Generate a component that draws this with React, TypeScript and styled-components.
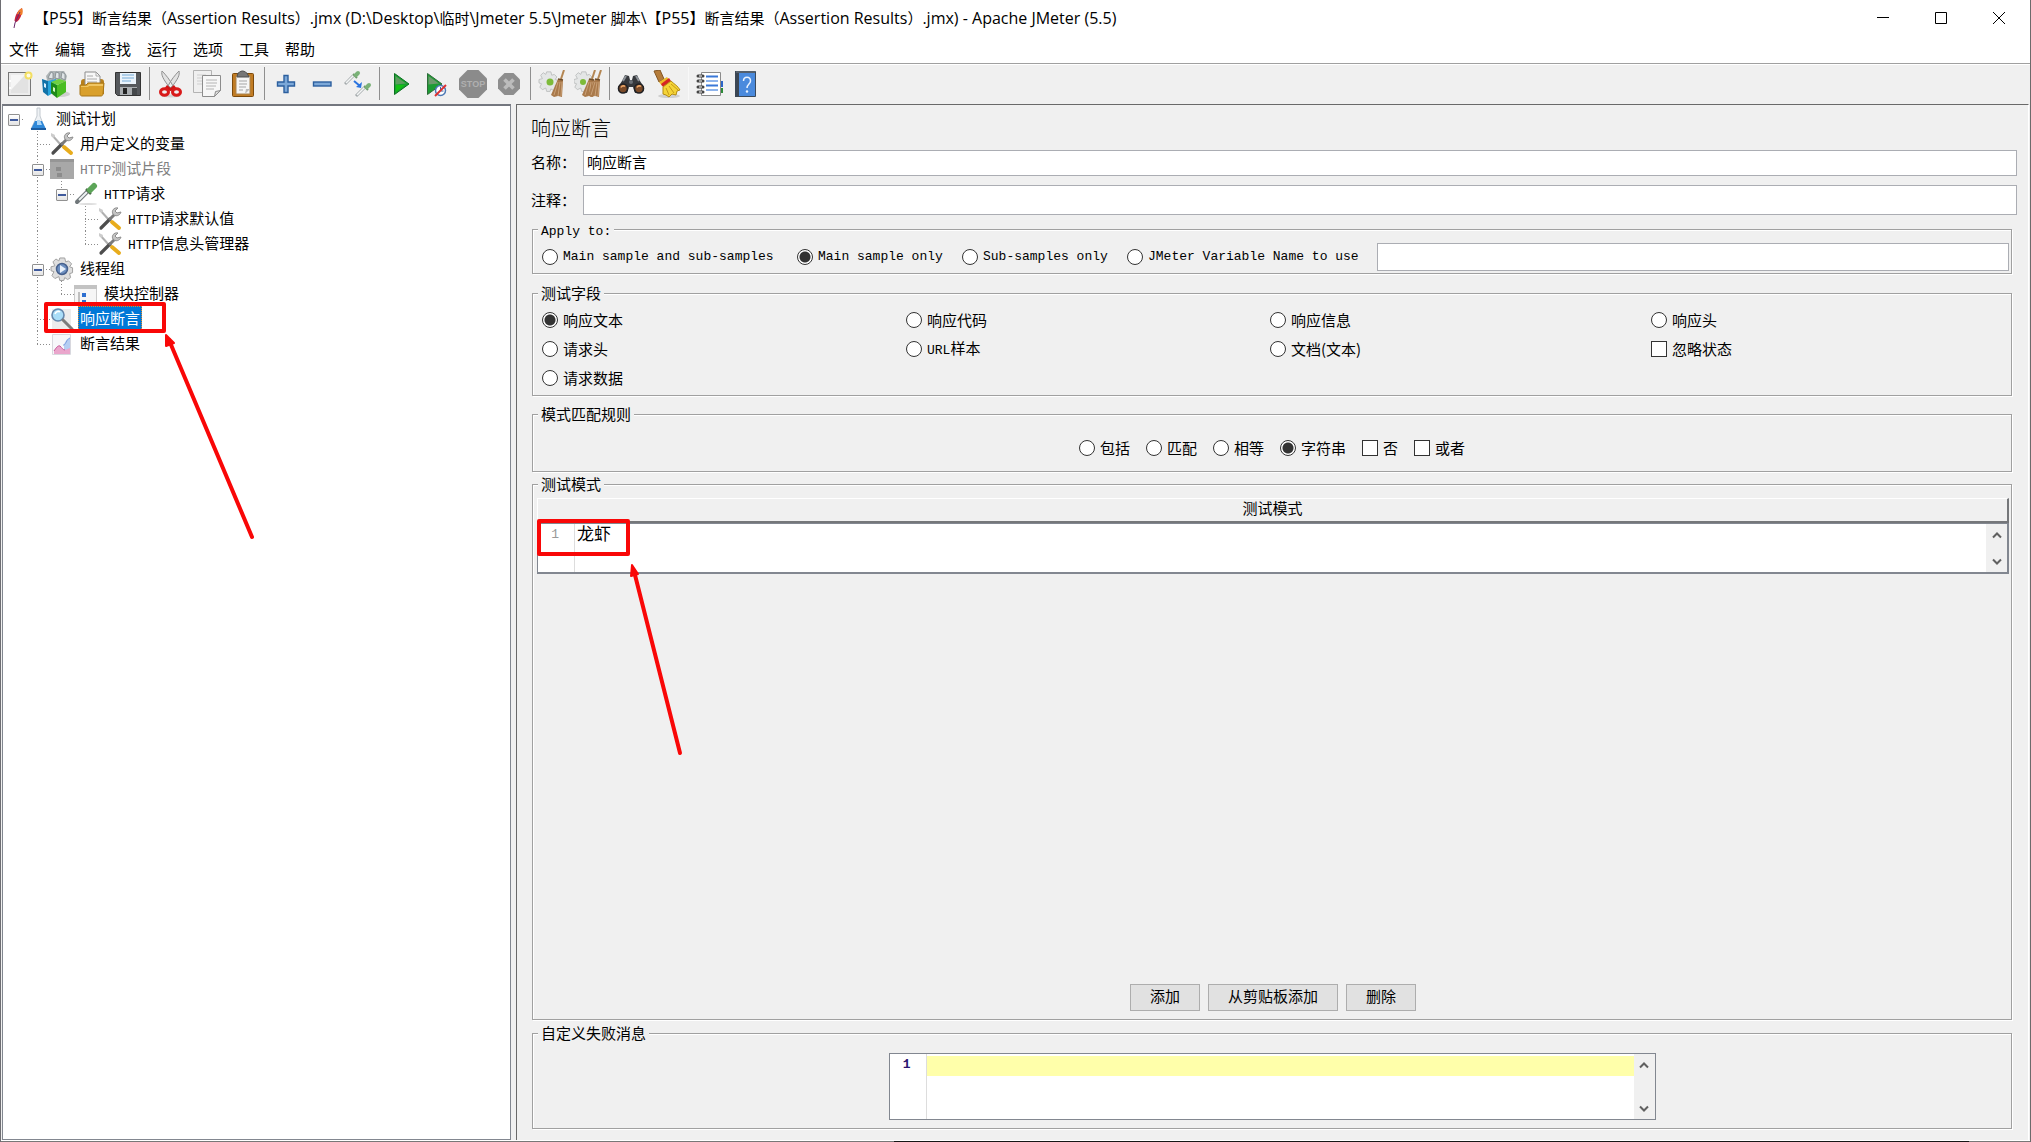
import React, { ReactNode } from "react";
import styled, { createGlobalStyle, css } from "styled-components";

const songStack = `"Liberation Mono", "Noto Sans CJK SC", monospace`;
const cjkStack = `"Noto Sans CJK SC", "Liberation Mono", sans-serif`;
const titleStack = `"Open Sans", "Noto Sans CJK SC", sans-serif`;

const face = "#f0f0f0";
const etch = "#a0a0a0";
const fieldBorder = "#abadb3";
const paneBorder = "#828790";

const GlobalStyle = createGlobalStyle`
  *, *::before, *::after { box-sizing: border-box; }
  body { margin: 0; background: ${face}; color: #000; font: 15px/20px ${cjkStack}; }
  button, input, textarea { font: inherit; color: inherit; margin: 0; padding: 0; border-radius: 0; outline: none; }
  ul { list-style: none; margin: 0; padding: 0; }
`;

/* ---------- window frame ---------- */

const Frame = styled.div`
  position: relative;
  display: flex;
  flex-direction: column;
  height: 100vh;
  min-height: 800px;
  background: ${face};
  border-left: 1px solid #6e6e73;
  border-right: 1px solid #6b6b6b;
  overflow: hidden;
`;

const BottomEdge = styled.div`
  height: 2px;
  border-top: 1px solid #fff;
  background: linear-gradient(to right, #777 0 44%, #161616 44% 97%, #777 97%);
`;

const TitleBar = styled.header`
  display: flex;
  align-items: center;
  height: 36px;
  padding: 0 2px 0 7px;
  background: #fff;
`;

const Title = styled.h1`
  flex: 1;
  margin: 0 0 0 6px;
  font: 400 15px/20px ${titleStack};
  white-space: nowrap;
`;

const TitleLatin = styled.span`
  font-size: 16px;
`;

const CaptionButton = styled.button`
  display: grid;
  place-items: center;
  width: 58px;
  height: 36px;
  border: 0;
  background: transparent;
`;

const MenuBar = styled.nav`
  display: flex;
  height: 28px;
  background: #fff;
  border-bottom: 1px solid ${etch};
`;

const MenuItem = styled.button`
  padding: 0 8px 2px;
  border: 0;
  background: transparent;
  font-family: ${titleStack};
  line-height: 24px;
`;

const ToolBar = styled.div`
  display: flex;
  align-items: center;
  height: 40px;
  padding: 0 0 2px 1px;
  border-top: 1px solid #fff;
`;

const ToolButton = styled.button`
  display: grid;
  place-items: center;
  width: 36px;
  height: 36px;
  border: 0;
  background: transparent;
`;

const ToolSeparator = styled.span<{ $faint?: boolean }>`
  width: 1px;
  height: 33px;
  margin: 0 3px;
  background: ${(p) => (p.$faint ? "#f8f8f8" : "#8f8f8f")};
`;

const Workspace = styled.main`
  flex: 1;
  display: grid;
  grid-template-columns: 509px 1fr;
  gap: 5px;
  min-height: 0;
  padding: 0 1px;
`;

/* ---------- test plan tree ---------- */

const TreePane = styled.section`
  background: #fff;
  border: 1px solid ${paneBorder};
  border-top: 2px solid #74777f;
`;

const TreeList = styled.ul`
  && {
    margin-left: -1px;
  }
`;

const TreeRow = styled.li`
  display: flex;
  align-items: center;
  height: 25px;
`;

type Guide = "none" | "line" | "tee" | "end" | "box" | "root";

const dotsDown = "repeating-linear-gradient(to bottom, #8c8c8c 0 1px, transparent 1px 3px)";
const dotsAcross = "repeating-linear-gradient(to right, #8c8c8c 0 1px, transparent 1px 3px)";

const guideArt: Record<Guide, string> = {
  none: "none",
  line: `${dotsDown} 11px 0 / 1px 100% no-repeat`,
  tee: `${dotsDown} 11px 0 / 1px 100% no-repeat, ${dotsAcross} 11px 13px / 13px 1px no-repeat`,
  end: `${dotsDown} 11px 0 / 1px 13px no-repeat, ${dotsAcross} 11px 13px / 13px 1px no-repeat`,
  box: `${dotsDown} 11px 0 / 1px 100% no-repeat, ${dotsAcross} 11px 13px / 13px 1px no-repeat`,
  root: `${dotsAcross} 11px 13px / 11px 1px no-repeat`,
};

const GuideCell = styled.span<{ $kind: Guide }>`
  display: grid;
  place-items: center;
  width: 24px;
  height: 25px;
  padding: 2px 1px 0 0;
  background: ${(p) => guideArt[p.$kind]};
`;

const Expander = styled.button`
  width: 12px;
  height: 12px;
  border: 1px solid #919191;
  border-radius: 1px;
  background: linear-gradient(#3f5a9c, #3f5a9c) center / 8px 2px no-repeat, linear-gradient(#fff, #e3e3e3);
`;

const TreeIcon = styled.span`
  display: grid;
  place-items: center;
  width: 24px;
  height: 25px;
`;

const TreeLabel = styled.span<{ $disabled?: boolean; $selected?: boolean }>`
  height: 25px;
  margin-left: 4px;
  padding: 0 2px;
  line-height: 23px;
  white-space: nowrap;
  ${(p) => p.$disabled && css`color: #808080;`}
  ${(p) =>
    p.$selected &&
    css`
      color: #fff;
      background: #0078d7;
      outline: 1px dotted #e08a2c;
      outline-offset: -1px;
    `}
`;

const Latin = styled.span`
  font: 13px/20px ${songStack};
`;

/* ---------- editor pane ---------- */

const EditorPane = styled.form`
  display: flex;
  flex-direction: column;
  min-width: 0;
  padding: 11px 11px 11px 14px;
  border-left: 1px solid #696969;
  border-top: 1px solid #696969;
  border-right: 1px solid #fff;
`;

const Heading = styled.h2`
  margin: 0;
  font: 300 20px/24px ${cjkStack};
`;

const FieldRow = styled.div`
  display: grid;
  grid-template-columns: 52px 1fr;
  align-items: center;
`;

const NameRow = styled(FieldRow)`
  margin-top: 10px;

  > label {
    padding-bottom: 2px;
  }
`;

const CommentRow = styled(FieldRow)`
  margin-top: 9px;
`;

const TextField = styled.input<{ $tall?: boolean }>`
  width: 100%;
  height: ${(p) => (p.$tall ? 30 : 26)}px;
  padding: 0 3px 4px;
  border: 1px solid ${fieldBorder};
  background: #fff;
`;

const Group = styled.fieldset<{ $gap: number }>`
  min-width: 0;
  margin: ${(p) => p.$gap}px 5px 0 1px;
  padding: 0;
  border: 1px solid ${etch};
  box-shadow: 1px 1px 0 #fff, inset 1px 1px 0 #fff;

  > legend {
    height: 17px;
    margin-left: 5px;
    padding: 0 3px;
    line-height: 16px;
    background: ${face};
  }
`;

const Choice = styled.label`
  display: flex;
  align-items: center;
  gap: 5px;
  white-space: nowrap;
`;

const Tick = styled.input`
  appearance: none;
  flex: none;
  width: 16px;
  height: 16px;
  border: 1px solid #333;
  background: #fff;

  &[type="radio"] {
    border-radius: 50%;
  }
  &[type="radio"]:checked {
    background: radial-gradient(circle, #333 0 5px, #fff 6px);
  }
`;

const ApplyTo = styled.div`
  display: grid;
  grid-template-columns: 255px 165px 165px 250px 1fr;
  align-items: center;
  padding: 5px 2px 2px 9px;
`;

const VariableField = styled(TextField)`
  height: 28px;
`;

const FieldGrid = styled.div`
  display: grid;
  grid-template-columns: 364fr 364fr 381fr 358fr;
  grid-auto-rows: 28px;
  row-gap: 1px;
  padding: 4px 2px 3px 9px;
`;

const RuleRow = styled.div`
  display: flex;
  justify-content: center;
  align-items: center;
  gap: 16px;
  height: 48px;
  padding-top: 1px;
`;

const PatternGroup = styled(Group)`
  flex: 1;
`;

const PatternBody = styled.div`
  display: flex;
  flex-direction: column;
  height: 100%;
  padding: 5px 2px 8px 4px;
`;

const PatternTable = styled.table`
  width: 100%;
  border-collapse: separate;
  border-spacing: 0;

  th {
    height: 25px;
    padding: 0 0 4px;
    border: 1px solid #fff;
    border-right: 2px solid #75777a;
    border-bottom: 2px solid #75777a;
    font-weight: 400;
    line-height: 16px;
  }
  td {
    padding: 0;
  }
`;

const CodePane = styled.div<{ $height: number }>`
  display: grid;
  grid-template-columns: 37px 1fr 21px;
  height: ${(p) => p.$height}px;
  border: 1px solid ${paneBorder};
  background: #fff;
`;

const PatternPane = styled(CodePane)`
  border-bottom-width: 2px;
  border-right-width: 2px;
`;

const Gutter = styled.span<{ $current?: boolean }>`
  padding-right: 15px;
  border-right: 1px solid #ddd;
  color: #999;
  font: 13px/22px ${songStack};
  text-align: right;
  ${(p) => p.$current && css`color: #2a1470; font-weight: 700;`}
`;

const CodeInput = styled.textarea<{ $highlight?: boolean }>`
  width: 100%;
  height: 100%;
  padding: 0 2px;
  border: 0;
  resize: none;
  overflow: hidden;
  font-size: 17px;
  line-height: 18px;
  background: ${(p) => (p.$highlight ? "linear-gradient(#ffffaa, #ffffaa) 0 2px / 100% 20px no-repeat #fff" : "#fff")};
`;

const ScrollBar = styled.div`
  display: flex;
  flex-direction: column;
  justify-content: space-between;
  background: ${face};
`;

const ScrollButton = styled.button`
  display: grid;
  place-items: center;
  height: 22px;
  border: 0;
  background: transparent;
`;

const ButtonRow = styled.div`
  display: flex;
  justify-content: center;
  gap: 8px;
  margin-top: auto;
`;

const PushButton = styled.button`
  height: 27px;
  padding: 0 19px 4px;
  border: 1px solid #adadad;
  background: #e1e1e1;
  line-height: 20px;
`;

const MessageBody = styled.div`
  display: flex;
  justify-content: center;
  padding: 11px 0 8px;
`;

const MessagePane = styled(CodePane)`
  width: 767px;
`;

/* ---------- annotations ---------- */

const Markup = styled.svg<{ $x: number; $y: number }>`
  position: absolute;
  left: ${(p) => p.$x}px;
  top: ${(p) => p.$y}px;
  pointer-events: none;
  fill: none;
  stroke: #f90707;
  stroke-width: 4;
  stroke-linecap: round;
  stroke-linejoin: round;
`;

/* ---------- icons ---------- */

const Icon = ({ children, size = 28 }: { children: ReactNode; size?: number }) => (
  <svg width={size} height={size} viewBox={`0 0 ${size} ${size}`} aria-hidden="true">
    {children}
  </svg>
);

const Feather = () => (
  <svg width="20" height="24" viewBox="0 0 20 24" aria-hidden="true">
    <path d="M14 2c-4 2-7 7-7.500 13l2 1C12 14 15 7 14 2Z" fill="#c8203c" />
    <path d="M14 2c-2 1-4 3-5 6l5 1c1-2 1-5 0-7Z" fill="#f0802c" />
    <path d="M12 6 7 17l-1 5" stroke="#6b2a6d" strokeWidth="1" fill="none" />
  </svg>
);

const NewIcon = () => (
  <Icon>
    <rect x="2.500" y="2.500" width="22" height="23" fill="#ececec" stroke="#777" />
    <path d="M5 5h17v18H5Z" fill="#e2e2e2" />
    <path d="M5 5h14L5 20Z" fill="#f6f6f6" />
    <path d="M4 10v2M4 17v2" stroke="#fff" strokeWidth="2" />
    <circle cx="22.500" cy="5.500" r="3" fill="#fffbe0" stroke="#f3df63" strokeWidth="2" />
  </Icon>
);

const TemplatesIcon = () => (
  <Icon>
    <ellipse cx="19" cy="24" rx="9" ry="3" fill="#cfcfcf" />
    <path d="M4 6 8 1h14l3 5-2 8H6Z" fill="#aeb4b6" />
    <path d="m6 8 3-6 2 1v6ZM13 8l1-6 3 1v6ZM19 8l1-6 3 2v6Z" fill="#dfe4e6" stroke="#7d868a" strokeWidth=".8" />
    <path d="m0 9 6 2v15l-5-4Z" fill="#1172a8" />
    <path d="m6 11 8-2v12l-8 5Z" fill="#28a5dc" />
    <path d="M2 13l2 1v4l-2-1Z" fill="#d8f0ff" />
    <path d="m9 12 6 3v13l-6-5Z" fill="#1e8a18" />
    <path d="m15 15 9-4v11l-9 6Z" fill="#49bd22" />
    <path d="m9 12 8-3 7 2-9 4Z" fill="#6fd040" />
    <path d="m11 17 2 1v4l-2-1Z" fill="#d3f7c0" />
  </Icon>
);

const OpenIcon = () => (
  <Icon>
    <path d="M3 12c0-2 1-3 3-3h17c2 0 3 1 3 3v12H3Z" fill="#b8801c" />
    <path d="M7 2h11l4 4v10H7Z" fill="#f7f7f7" stroke="#8d8d8d" />
    <path d="M18 2v4h4M9 6h6M9 9h10M9 12h10" stroke="#aaa" fill="none" />
    <path d="M2 15h6l2-2h16l-1 11c0 1-1 2-2 2H4c-1 0-2-1-2-2Z" fill="#d9a02c" stroke="#a87618" />
    <path d="M3 16h6l2-2h14v2H11l-1 1H3Z" fill="#f0c562" />
  </Icon>
);

const SaveIcon = () => (
  <Icon>
    <path d="M1.500 2.500h25v23h-23l-2-2Z" fill="#55585c" stroke="#333" />
    <path d="M6 3h16v11H6Z" fill="#eaf3fb" />
    <path d="M8 5h12M8 8h12M8 11h9" stroke="#9cc4e4" strokeWidth="1.500" />
    <path d="M6 17h17v8H6Z" fill="#a9adb0" />
    <path d="M9 18h4v6H9Z" fill="#222" />
    <path d="M18 18h5v7h-5Z" fill="#44484b" />
  </Icon>
);

const CutIcon = () => (
  <Icon>
    <ellipse cx="14" cy="26" rx="10" ry="1.500" fill="#d3d3d3" />
    <path d="M5 1c-1 4 1 8 8 17l3-2C13 10 9 5 5 1ZM22 1c1 4-1 8-8 17l-3-2C14 10 18 5 22 1Z" fill="#e2e2e2" stroke="#909090" />
    <path d="m10 15 3.500 3 3.500-3 3 4-6.500 2L7 19Z" fill="#cf1515" />
    <ellipse cx="7.500" cy="22" rx="4" ry="3.200" fill="none" stroke="#d91a1a" strokeWidth="3" />
    <ellipse cx="19.500" cy="22" rx="4" ry="3.200" fill="none" stroke="#d91a1a" strokeWidth="3" />
  </Icon>
);

const CopyIcon = () => (
  <Icon>
    <path d="M.5.500h18v22H.5Z" fill="#efefef" stroke="#b3b3b3" />
    <path d="M4 5h9M4 8h5M4 11h5M4 14h5" stroke="#cfcfcf" />
    <path d="M9.500 5.500h18v15l-6 6h-12Z" fill="#f7f7f7" stroke="#8c8c8c" />
    <path d="M13 10h11M13 13h11M13 16h10M13 19h8" stroke="#b4b4b4" />
    <path d="m21.500 26.500 1-5 5-1Z" fill="#ddd" stroke="#8c8c8c" />
  </Icon>
);

const PasteIcon = () => (
  <Icon>
    <rect x="3.500" y="3.500" width="21" height="23" rx="1" fill="#c17c24" stroke="#7c4a0c" />
    <path d="M7 6h14v18H7Z" fill="#f6f6f6" stroke="#a8824e" />
    <path d="M9 3c1 0 2-2 4.500-2S17 3 18 3l2 4H8Z" fill="#777" stroke="#4f4f4f" />
    <path d="M10 11h8M10 14h8M10 17h7M10 20h4" stroke="#a5a5a5" />
    <path d="m16 24 1-5h4Z" fill="#bbb" />
  </Icon>
);

const PlusIcon = () => (
  <Icon>
    <path d="M12 5.500h4V12h6.500v4H16v6.500h-4V16H5.500v-4H12Z" fill="#7ca8d8" stroke="#2c5f9e" strokeWidth="1.400" />
  </Icon>
);

const MinusIcon = () => (
  <Icon>
    <rect x="5.500" y="12" width="17.500" height="4" fill="#7ca8d8" stroke="#2c5f9e" strokeWidth="1.400" />
  </Icon>
);

const Dropper = ({ x = 0, y = 0 }: { x?: number; y?: number }) => (
  <g transform={`translate(${x} ${y})`}>
    <path d="M1 14 9 6" stroke="#a3a9ab" strokeWidth="3" />
    <path d="M2 13 9 6" stroke="#f4f6f6" strokeWidth="1.600" />
    <path d="m9 4 4 4" stroke="#6f9a6c" strokeWidth="2" />
    <path d="m12 5 2-2" stroke="#7ab277" strokeWidth="4" strokeLinecap="round" />
  </g>
);

const ToggleIcon = () => (
  <Icon>
    <Dropper x={0} y={0} />
    <Dropper x={11} y={12} />
    <path d="m10 11 6 5" stroke="#2a74e0" strokeWidth="2" />
    <path d="m18 12-1 6-5-1Z" fill="#2a74e0" />
  </Icon>
);

const StartIcon = () => (
  <Icon>
    <path d="M7.500 3.500 22 14 7.500 24.500Z" fill="#18a030" stroke="#0c7020" />
    <path d="M8.500 6 19 13.500l-10.500 1Z" fill="#5f9d60" />
    <path d="M9 15h9l-9 7Z" fill="#12c312" />
  </Icon>
);

const StartNoTimersIcon = () => (
  <Icon>
    <path d="M4.500 3.500 19 14 4.500 24.500Z" fill="#1d9c34" stroke="#2d6b38" />
    <path d="M5.500 6 16 13.500l-10.500 1Z" fill="#6d9a6d" />
    <circle cx="17.500" cy="20.500" r="5" fill="#fff" stroke="#4d78b4" strokeWidth="1.500" />
    <path d="M17.500 17v4h3" stroke="#3a62a0" fill="none" />
    <path d="m12 26 11-11" stroke="#dd3030" strokeWidth="2" />
  </Icon>
);

const StopText = styled.text`
  font: 700 9px/9px "Liberation Sans", sans-serif;
  fill: #b0b0b0;
  text-anchor: middle;
`;

const StopIcon = () => (
  <Icon>
    <path d="M8.500 0h11L28 8.500v11L19.500 28h-11L0 19.500v-11Z" fill="#8b8b8b" />
    <StopText x="14" y="17">STOP</StopText>
  </Icon>
);

const ShutdownIcon = () => (
  <Icon>
    <path d="M9.500 3h9L25 9.500v9L18.500 25h-9L3 18.500v-9Z" fill="#8e8e8e" />
    <path d="m9.500 9.500 9 9m0-9-9 9" stroke="#bcbcbc" strokeWidth="3.600" />
  </Icon>
);

const gearTeeth =
  "M9 1h5l1 4 3-1 3 3-2 3 3 1v5l-3 1 1 4-3 2-3-2-1 3h-4l-1-4-4 2-3-3 2-4-3-1v-4l4-1-2-4 3-3 3 2Z";

const Brush = ({ x }: { x: number }) => (
  <g transform={`translate(${x} 0)`}>
    <path d="m13 0-3 9" stroke="#b48652" strokeWidth="2" />
    <path d="m7 9 5 1-1 17-4-1-4 1-3-2Z" fill="#a9794a" />
    <path d="M7 12 3 25M9 12 7 26M11 12l-1 14" stroke="#c9a077" />
    <path d="m7 9 5 1" stroke="#6f4c28" strokeWidth="1.500" />
  </g>
);

const ClearIcon = () => (
  <Icon>
    <path d={gearTeeth} transform="translate(1 1) scale(.85)" fill="#e4e6e6" stroke="#b9bcbc" />
    <circle cx="12" cy="12" r="3.500" fill="#7dbb3a" />
    <Brush x={13} />
  </Icon>
);

const ClearAllIcon = () => (
  <Icon>
    <path d={gearTeeth} transform="translate(0 1) scale(.85)" fill="#e4e6e6" stroke="#b9bcbc" />
    <circle cx="9" cy="12" r="3" fill="#7dbb3a" />
    <Brush x={8} />
    <Brush x={14} />
  </Icon>
);

const SearchIcon = () => (
  <Icon>
    <path d="M5 11 8 5l4 1 1 4h2l1-4 4-1 3 6 4 6-2 6h-7l-2-6h-4l-2 6H3l-2-6Z" fill="#36383c" />
    <path d="m6 11 3-5M22 11l-3-5" stroke="#8c9197" strokeWidth="2" />
    <circle cx="6" cy="18.500" r="4.500" fill="#7a4a28" stroke="#202124" strokeWidth="1.600" />
    <circle cx="22" cy="18.500" r="4.500" fill="#7a4a28" stroke="#202124" strokeWidth="1.600" />
    <path d="M4 17.500c1-2 3-2 4-1M20 17.500c1-2 3-2 4-1" stroke="#e8a468" strokeWidth="1.600" fill="none" />
    <circle cx="14" cy="12" r="2" fill="#6b7076" />
  </Icon>
);

const BroomIcon = () => (
  <Icon>
    <ellipse cx="16" cy="26" rx="11" ry="2" fill="#cfcfcf" />
    <path d="m1 1 6-1 4 9-5 3Z" fill="#b57c3a" stroke="#845522" />
    <path d="m6 12 8-5 3 4-8 5Z" fill="#edbb28" />
    <path d="m8 14 8-6 2 3-8 6Z" fill="#d62424" />
    <path d="m10 17 8-6c3 3 7 5 9 9l-3 1-1 4-4-1-3 3-3-2-3-1Z" fill="#f5d437" stroke="#b48b12" />
    <path d="m13 18 3 7M16 16l5 7M18 14l7 6" stroke="#c49a18" />
  </Icon>
);

const FunctionIcon = () => (
  <Icon>
    <path d="M22 11h5v6h-5Z" fill="#2b65c8" />
    <path d="M22 18h5v5h-5Z" fill="#2c8a38" />
    <path d="M5.500 2.500h19v23h-19Z" fill="#fff" stroke="#8b8b8b" />
    <path d="M10 6.500h12M10 15.500h12" stroke="#3a78d8" strokeWidth="2" />
    <path d="M10 11h12M10 20h12" stroke="#8eb4ec" strokeWidth="2" />
    <path d="M2 6h5M2 11h5M2 17h5M2 22h5" stroke="#444" strokeWidth="3" strokeLinecap="round" />
    <path d="M3 6h3M3 11h3M3 17h3M3 22h3" stroke="#fff" />
  </Icon>
);

const HelpIcon = () => (
  <Icon>
    <path d="M3.500 1.500h20v25h-20Z" fill="#4a8add" stroke="#3a4a5c" />
    <path d="M3 1h4v26H3Z" fill="#3b4654" />
    <path d="M4 1h19v2H4Z" fill="#55606c" />
    <path d="M11.500 11c0-5 7-5 7 0 0 3-3.500 3-3.500 7" stroke="#eaf3ff" strokeWidth="1.500" fill="none" />
    <circle cx="15" cy="21.500" r="1.200" fill="#eaf3ff" />
  </Icon>
);

const FlaskIcon = () => (
  <Icon size={24}>
    <path d="M11 1h3v8l5 13H5l6-13Z" fill="#eef1f4" stroke="#c3cad0" />
    <path d="M9 14h7l4 8H5Z" fill="#2d87d8" />
    <path d="M11 13h3l2 5h-5Z" fill="#a6d3f7" />
    <path d="M5 22h15" stroke="#1a5ba0" strokeWidth="2" />
  </Icon>
);

const ToolsIcon = () => (
  <Icon size={24}>
    <path d="m2 3 9 10" stroke="#b0b0b0" strokeWidth="2" />
    <path d="m1 1 4 2-1 3-3-2Z" fill="#ccc" />
    <path d="m14 15 7 6" stroke="#e8ac1c" strokeWidth="4" strokeLinecap="round" />
    <path d="m3 21 9-9" stroke="#4d4d4d" strokeWidth="3.200" strokeLinecap="round" />
    <path d="m11 13 6-6" stroke="#7a7a7a" strokeWidth="3" />
    <path d="M20 1c-4-1-7 3-5 6 2 3 7 2 8-2l-4 1-2-2Z" fill="#c4c4c4" stroke="#8e8e8e" />
  </Icon>
);

const FragmentIcon = () => (
  <Icon size={24}>
    <path d="M0 2h24v20H0Z" fill="#a8a8a8" />
    <path d="M0 2h24v3H0Z" fill="#969696" />
    <path d="M6 10h5v4H6ZM7 16h5v4H7Z" fill="#8c8c8c" />
  </Icon>
);

const SamplerIcon = () => (
  <Icon size={24}>
    <ellipse cx="14" cy="22" rx="9" ry="1" fill="#ddd" />
    <path d="M3 20 13 10" stroke="#70777a" strokeWidth="4" strokeLinecap="round" />
    <path d="M5 18 13 10" stroke="#eef2f2" strokeWidth="2" />
    <path d="m12 7 5 5" stroke="#4c6b4a" strokeWidth="2.500" />
    <path d="m16 8 4-4" stroke="#5ca558" strokeWidth="6" strokeLinecap="round" />
  </Icon>
);

const ThreadsIcon = () => (
  <Icon size={24}>
    <path d={gearTeeth} transform="translate(1 0) scale(.98)" fill="#dedede" stroke="#a0a0a0" />
    <circle cx="12" cy="12" r="5.500" fill="#6d8fc0" stroke="#46608c" strokeWidth="1.500" />
    <path d="m10 8 6 4-6 4Z" fill="#e8f0fa" />
  </Icon>
);

const ModuleIcon = () => (
  <Icon size={24}>
    <path d="M.5 3.500h22V24H.5Z" fill="#f6f6f6" stroke="#ccc" />
    <path d="M0 3h23v4H0Z" fill="#c3c3c3" />
    <path d="M5 10v11h3" stroke="#8a8a8a" fill="none" />
    <path d="M8 11h4v4H8ZM8 18h4v4H8Z" fill="#2d6fd0" />
  </Icon>
);

const AssertionIcon = () => (
  <Icon size={24}>
    <path d="M2 2h19v20H2Z" fill="#ececec" />
    <circle cx="8" cy="8" r="6" fill="#a9ddf8" stroke="#6487ac" strokeWidth="1.600" />
    <path d="M5 7c1-3 4-3 5-2" stroke="#fff" strokeWidth="1.500" fill="none" />
    <path d="m13 13 9 9" stroke="#7c7c7c" strokeWidth="3" strokeLinecap="round" />
  </Icon>
);

const ResultsIcon = () => (
  <Icon size={24}>
    <path d="M2.500 2.500h18v20h-18Z" fill="#f7f7fa" stroke="#d8d8de" />
    <path d="M14 12c2-4 4-6 6-6v12h-6Z" fill="#b5cdf2" />
    <path d="M4 22v-3c2-3 4-6 6-5 2 2 3 4 5 4l5-2v6Z" fill="#eaa6cc" />
    <path d="M4 19c2-3 4-6 6-5 2 2 3 4 5 4" stroke="#c7599a" fill="none" />
    <path d="M13 13c3 1 3-6 7-7" stroke="#7f9fe0" fill="none" />
  </Icon>
);

const ChevronUp = () => (
  <svg width="10" height="7" viewBox="0 0 10 7" aria-hidden="true">
    <path d="m1 5.500 4-4 4 4" fill="none" stroke="#606060" strokeWidth="2" />
  </svg>
);

const ChevronDown = () => (
  <svg width="10" height="7" viewBox="0 0 10 7" aria-hidden="true">
    <path d="m1 1.500 4 4 4-4" fill="none" stroke="#606060" strokeWidth="2" />
  </svg>
);

/* ---------- data ---------- */

const titleText =
  "【P55】断言结果（Assertion Results）.jmx (D:\\Desktop\\临时\\Jmeter 5.5\\Jmeter 脚本\\【P55】断言结果（Assertion Results）.jmx) - Apache JMeter (5.5)";

const menus = ["文件", "编辑", "查找", "运行", "选项", "工具", "帮助"];

const toolGroups: { name: string; icon: ReactNode }[][] = [
  [
    { name: "新建", icon: <NewIcon /> },
    { name: "模板", icon: <TemplatesIcon /> },
    { name: "打开", icon: <OpenIcon /> },
    { name: "保存", icon: <SaveIcon /> },
  ],
  [
    { name: "剪切", icon: <CutIcon /> },
    { name: "复制", icon: <CopyIcon /> },
    { name: "粘贴", icon: <PasteIcon /> },
  ],
  [
    { name: "展开", icon: <PlusIcon /> },
    { name: "折叠", icon: <MinusIcon /> },
    { name: "切换", icon: <ToggleIcon /> },
  ],
  [
    { name: "启动", icon: <StartIcon /> },
    { name: "不停顿启动", icon: <StartNoTimersIcon /> },
    { name: "停止", icon: <StopIcon /> },
    { name: "关闭", icon: <ShutdownIcon /> },
  ],
  [
    { name: "清除", icon: <ClearIcon /> },
    { name: "清除全部", icon: <ClearAllIcon /> },
  ],
  [
    { name: "查找", icon: <SearchIcon /> },
    { name: "重置查找", icon: <BroomIcon /> },
  ],
  [
    { name: "函数助手", icon: <FunctionIcon /> },
    { name: "帮助", icon: <HelpIcon /> },
  ],
];

type PlanNode = {
  guides: Guide[];
  icon: ReactNode;
  latin?: string;
  text: string;
  disabled?: boolean;
  selected?: boolean;
  open?: boolean;
};

const nodes: PlanNode[] = [
  { guides: ["root"], open: true, icon: <FlaskIcon />, text: "测试计划" },
  { guides: ["none", "tee"], icon: <ToolsIcon />, text: "用户定义的变量" },
  { guides: ["none", "box"], open: true, icon: <FragmentIcon />, latin: "HTTP", text: "测试片段", disabled: true },
  { guides: ["none", "line", "end"], open: true, icon: <SamplerIcon />, latin: "HTTP", text: "请求" },
  { guides: ["none", "line", "none", "tee"], icon: <ToolsIcon />, latin: "HTTP", text: "请求默认值" },
  { guides: ["none", "line", "none", "end"], icon: <ToolsIcon />, latin: "HTTP", text: "信息头管理器" },
  { guides: ["none", "box"], open: true, icon: <ThreadsIcon />, text: "线程组" },
  { guides: ["none", "line", "end"], icon: <ModuleIcon />, text: "模块控制器" },
  { guides: ["none", "tee"], icon: <AssertionIcon />, text: "响应断言", selected: true },
  { guides: ["none", "end"], icon: <ResultsIcon />, text: "断言结果" },
];

const scopes = ["Main sample and sub-samples", "Main sample only", "Sub-samples only", "JMeter Variable Name to use"];

const testFields: { text: string; latin?: string; box?: boolean }[] = [
  { text: "响应文本" },
  { text: "响应代码" },
  { text: "响应信息" },
  { text: "响应头" },
  { text: "请求头" },
  { text: "样本", latin: "URL" },
  { text: "文档(文本)" },
  { text: "忽略状态", box: true },
  { text: "请求数据" },
];

const rules: { text: string; box?: boolean }[] = [
  { text: "包括" },
  { text: "匹配" },
  { text: "相等" },
  { text: "字符串" },
  { text: "否", box: true },
  { text: "或者", box: true },
];

const Scroller = () => (
  <ScrollBar>
    <ScrollButton type="button" aria-label="向上滚动"><ChevronUp /></ScrollButton>
    <ScrollButton type="button" aria-label="向下滚动"><ChevronDown /></ScrollButton>
  </ScrollBar>
);

export default function App() {
  return (
    <>
      <GlobalStyle />
      <Frame>
        <TitleBar>
          <Feather />
          <Title>
            {titleText.split(/([ -~]+)/).map((part, i) => (i % 2 ? <TitleLatin key={i}>{part}</TitleLatin> : part))}
          </Title>
          <CaptionButton aria-label="最小化">
            <svg width="12" height="12"><path d="M0 5.500h12" stroke="#000" /></svg>
          </CaptionButton>
          <CaptionButton aria-label="最大化">
            <svg width="12" height="12"><path d="M.5.500h11v11H.5Z" stroke="#000" fill="none" /></svg>
          </CaptionButton>
          <CaptionButton aria-label="关闭窗口">
            <svg width="12" height="12"><path d="m0 0 12 12M12 0 0 12" stroke="#000" /></svg>
          </CaptionButton>
        </TitleBar>

        <MenuBar>
          {menus.map((m) => <MenuItem key={m}>{m}</MenuItem>)}
        </MenuBar>

        <ToolBar>
          {toolGroups.map((group, g) => (
            <React.Fragment key={g}>
              {g > 0 && <ToolSeparator $faint={g === 6} />}
              {group.map((t) => (
                <ToolButton key={t.name} aria-label={t.name}>{t.icon}</ToolButton>
              ))}
            </React.Fragment>
          ))}
        </ToolBar>

        <Workspace>
          <TreePane>
            <TreeList>
              {nodes.map((n) => (
                <TreeRow key={n.text}>
                  {n.guides.map((kind, i) => (
                    <GuideCell key={i} $kind={kind}>
                      {n.open && i === n.guides.length - 1 && <Expander aria-label={`折叠 ${n.text}`} />}
                    </GuideCell>
                  ))}
                  <TreeIcon>{n.icon}</TreeIcon>
                  <TreeLabel $disabled={n.disabled} $selected={n.selected}>
                    {n.latin && <Latin>{n.latin}</Latin>}
                    {n.text}
                  </TreeLabel>
                </TreeRow>
              ))}
            </TreeList>
          </TreePane>

          <EditorPane>
            <Heading>响应断言</Heading>
            <NameRow>
              <label htmlFor="name">名称：</label>
              <TextField id="name" defaultValue="响应断言" />
            </NameRow>
            <CommentRow>
              <label htmlFor="comment">注释：</label>
              <TextField id="comment" $tall />
            </CommentRow>

            <Group $gap={6}>
              <legend><Latin>Apply to:</Latin></legend>
              <ApplyTo>
                {scopes.map((s, i) => (
                  <Choice key={s}>
                    <Tick type="radio" name="scope" defaultChecked={i === 1} />
                    <Latin>{s}</Latin>
                  </Choice>
                ))}
                <VariableField aria-label="JMeter Variable Name" />
              </ApplyTo>
            </Group>

            <Group $gap={11}>
              <legend>测试字段</legend>
              <FieldGrid>
                {testFields.map((f, i) => (
                  <Choice key={f.text}>
                    <Tick type={f.box ? "checkbox" : "radio"} name={f.box ? "ignore" : "field"} defaultChecked={i === 0} />
                    <span>{f.latin && <Latin>{f.latin}</Latin>}{f.text}</span>
                  </Choice>
                ))}
              </FieldGrid>
            </Group>

            <Group $gap={10}>
              <legend>模式匹配规则</legend>
              <RuleRow>
                {rules.map((r) => (
                  <Choice key={r.text}>
                    <Tick type={r.box ? "checkbox" : "radio"} name={r.box ? r.text : "rule"} defaultChecked={r.text === "字符串"} />
                    <span>{r.text}</span>
                  </Choice>
                ))}
              </RuleRow>
            </Group>

            <PatternGroup $gap={4}>
              <legend>测试模式</legend>
              <PatternBody>
                <PatternTable>
                  <thead><tr><th scope="col">测试模式</th></tr></thead>
                  <tbody>
                    <tr>
                      <td>
                        <PatternPane $height={51}>
                          <Gutter>1</Gutter>
                          <CodeInput aria-label="测试模式" defaultValue="龙虾" />
                          <Scroller />
                        </PatternPane>
                      </td>
                    </tr>
                  </tbody>
                </PatternTable>
                <ButtonRow>
                  <PushButton type="button">添加</PushButton>
                  <PushButton type="button">从剪贴板添加</PushButton>
                  <PushButton type="button">删除</PushButton>
                </ButtonRow>
              </PatternBody>
            </PatternGroup>

            <Group $gap={5}>
              <legend>自定义失败消息</legend>
              <MessageBody>
                <MessagePane $height={67}>
                  <Gutter $current>1</Gutter>
                  <CodeInput $highlight aria-label="自定义失败消息" />
                  <Scroller />
                </MessagePane>
              </MessageBody>
            </Group>
          </EditorPane>
        </Workspace>
        <BottomEdge />

        <Markup $x={40} $y={299} width="220" height="244" viewBox="41 300 220 244">
          <path d="M46 305h118v27H46Z" />
          <path d="M252 538 169 341" />
          <path d="m166 336 8 8-8 3Z" fill="#f90707" strokeWidth="2" />
        </Markup>
        <Markup $x={534} $y={515} width="152" height="246" viewBox="535 516 152 246">
          <path d="M539 522h89v33h-89Z" />
          <path d="M680 754 634 572" />
          <path d="m632 566 6 9-7 2Z" fill="#f90707" strokeWidth="2" />
        </Markup>
      </Frame>
    </>
  );
}
